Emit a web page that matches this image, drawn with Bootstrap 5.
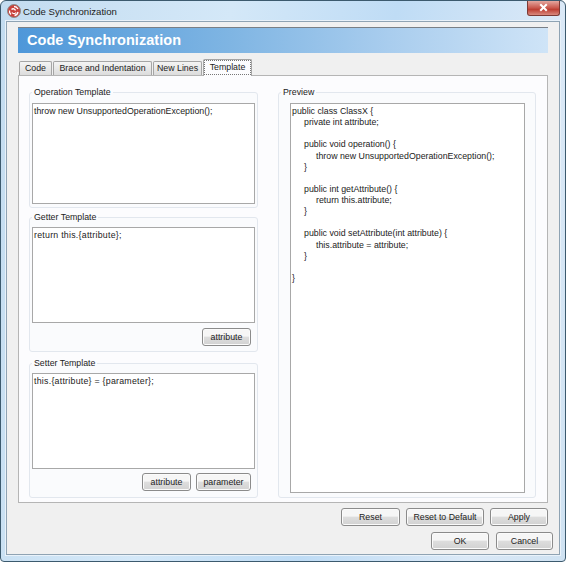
<!DOCTYPE html>
<html lang="en"><head><meta charset="utf-8"><title>Code Synchronization</title>
<link href="https://cdn.jsdelivr.net/npm/bootstrap@5.3.0/dist/css/bootstrap.min.css" rel="stylesheet">
<style>
html,body{margin:0;height:562px;overflow:hidden;background:#fff}
body{font-family:"Liberation Sans",sans-serif;font-size:8.8px;color:#222;line-height:11px}
.win{width:566px;height:562px;border:1px solid #3c5a6e;border-radius:6px 6px 4px 4px;background:linear-gradient(100deg,#c3dcf0 0%,#d4e8f8 35%,#bfdcf5 60%,#dbe9f7 85%,#cfe2f2 100%)}
.tbar{height:20px;padding-left:6px}
.ttl{font-size:9.6px;color:#222;margin-left:2px}
.xbtn{width:33px;height:15px;margin-right:5px;margin-top:-5px;border:1px solid #7c3a35;border-top:0;border-radius:0 0 3px 3px;background:linear-gradient(#e4a79f,#c9564b 50%,#bd3f33 60%,#d98a7f)}
.client{margin:0 5px;height:534px;border:1px solid #8fa3b3;background:#f0f0f0;padding:5px 11px 0;outline:1px solid #e9f2fa}
.banner{height:26px;border-top:1px solid #7a7f85;background:linear-gradient(90deg,#4e97d9,#7fb5e3 40%,#a9cdee 70%,#cfe4f7);padding-left:9px;font-weight:700;font-size:14.5px;letter-spacing:.05px;line-height:25px;color:#fff}
.tabs{margin-top:6px;height:16px;padding-left:1px;border:0;position:relative;z-index:1;align-items:flex-end;flex-wrap:nowrap}
.tb{height:14px;padding:0;line-height:13px;margin-right:1px;border:1px solid #a5a5a5;border-bottom:0;border-radius:2px 2px 0 0;background:linear-gradient(#f4f4f4,#dcdcdc);color:#222;text-align:center;white-space:nowrap}
.tb.on{height:17px;margin-bottom:-1px;background:#fcfcfe;outline:1px dotted #777;outline-offset:-2px;line-height:15px}
.t1{width:33px}.t2{width:99px}.t3{width:49px}.t4{width:49px}
.panel{height:428px;border:1px solid #b5b5b5;background:#fcfcfe;padding:16px 10px 0}
.lcol{width:229px}
.rcol{width:258px;margin-left:20px}
.grp{border:1px solid #e2e7ee;border-radius:3px;background:#fafbfd;padding:0 2px}
.gt{height:11px;margin:-6px 0 0 0;padding:0 2px;width:max-content;background:linear-gradient(#fcfcfe 50%,#fafbfd 50%);line-height:11px}
.g1{height:116px}.g2{height:135px;margin-top:9px}.g3{height:135px;margin-top:11px}.g4{height:406px}
.ta{border:1px solid #a8a8a8;border-radius:0;padding:2px 1px;background:#fff;line-height:11.13px;font-size:8.8px;color:#222;white-space:pre;tab-size:12px;box-shadow:none;min-height:0;overflow:hidden}
.h1a{height:101px;margin-top:5px}
.h2a{height:96px;margin-top:4px;letter-spacing:.25px}
.prev{height:390px;width:235px;margin:5px 0 0 9px;padding:2px 1px}
.bbar{padding:5px 4px 0 0}
.g3 .bbar{padding-top:4px}
.wb{border:1px solid #8b8b8b;border-radius:3px;background:linear-gradient(#f6f6f6 45%,#dedede 50%,#d2d2d2);color:#222;font-size:8.8px;line-height:14px;padding:0;box-shadow:inset 0 0 0 1px #fbfbfb}
.b-s{height:18px}
.bs1{width:49px}.bs2{width:55px;margin-left:5px}
.br1{height:18px;margin-top:5px}
.br2{height:18px;margin-top:6px;margin-right:-5px}
.r1{width:59px}.r2{width:78px;margin-left:6px}.r3{width:58px;margin-left:6px}
.o1{width:58px}.o2{width:57px;margin-left:7px}
</style></head><body>
<div class="win">
 <div class="tbar d-flex align-items-center justify-content-between">
  <div class="d-flex align-items-center">
   <svg width="14" height="14" viewBox="0 0 14 14"><circle cx="7" cy="7" r="6.500" fill="#c9423c" stroke="#8d8d8d"/><path d="M7 2.500a4.500 4.500 0 0 1 4 2.500 M11 8a4.500 4.500 0 0 1-3.500 3.500 M4 10.500a4.500 4.500 0 0 1-1.500-4 M4.500 5.500C6 4 8 5 8.500 6.500 M9 8.500C8 10 6 10 5 8.500" fill="none" stroke="#fff" stroke-width="1.300"/></svg>
   <span class="ttl">Code Synchronization</span>
  </div>
  <svg class="xbtn" viewBox="0 0 33 15"><path d="M13 3.500l7 7M20 3.500l-7 7" stroke="#fff" stroke-width="2.200"/></svg>
 </div>
 <div class="client">
  <div class="banner">Code Synchronization</div>
  <div class="tabs nav d-flex">
   <div class="tb t1">Code</div>
   <div class="tb t2">Brace and Indentation</div>
   <div class="tb t3">New Lines</div>
   <div class="tb t4 on">Template</div>
  </div>
  <div class="panel d-flex">
   <div class="lcol">
    <div class="grp g1"><div class="gt">Operation Template</div>
     <div class="ta form-control h1a">throw new UnsupportedOperationException();</div></div>
    <div class="grp g2"><div class="gt">Getter Template</div>
     <div class="ta form-control h2a">return this.{attribute};</div>
     <div class="bbar d-flex justify-content-end"><button class="btn wb b-s bs1">attribute</button></div></div>
    <div class="grp g3"><div class="gt">Setter Template</div>
     <div class="ta form-control h2a">this.{attribute} = {parameter};</div>
     <div class="bbar d-flex justify-content-end"><button class="btn wb b-s bs1">attribute</button><button class="btn wb b-s bs2">parameter</button></div></div>
   </div>
   <div class="rcol">
    <div class="grp g4"><div class="gt">Preview</div>
     <div class="ta form-control prev">public class ClassX {
	private int attribute;

	public void operation() {
		throw new UnsupportedOperationException();
	}

	public int getAttribute() {
		return this.attribute;
	}

	public void setAttribute(int attribute) {
		this.attribute = attribute;
	}

}</div></div>
   </div>
  </div>
  <div class="br1 d-flex justify-content-end"><button class="btn wb r1">Reset</button><button class="btn wb r2">Reset to Default</button><button class="btn wb r3">Apply</button></div>
  <div class="br2 d-flex justify-content-end"><button class="btn wb o1">OK</button><button class="btn wb o2">Cancel</button></div>
 </div>
</div>
</body></html>
